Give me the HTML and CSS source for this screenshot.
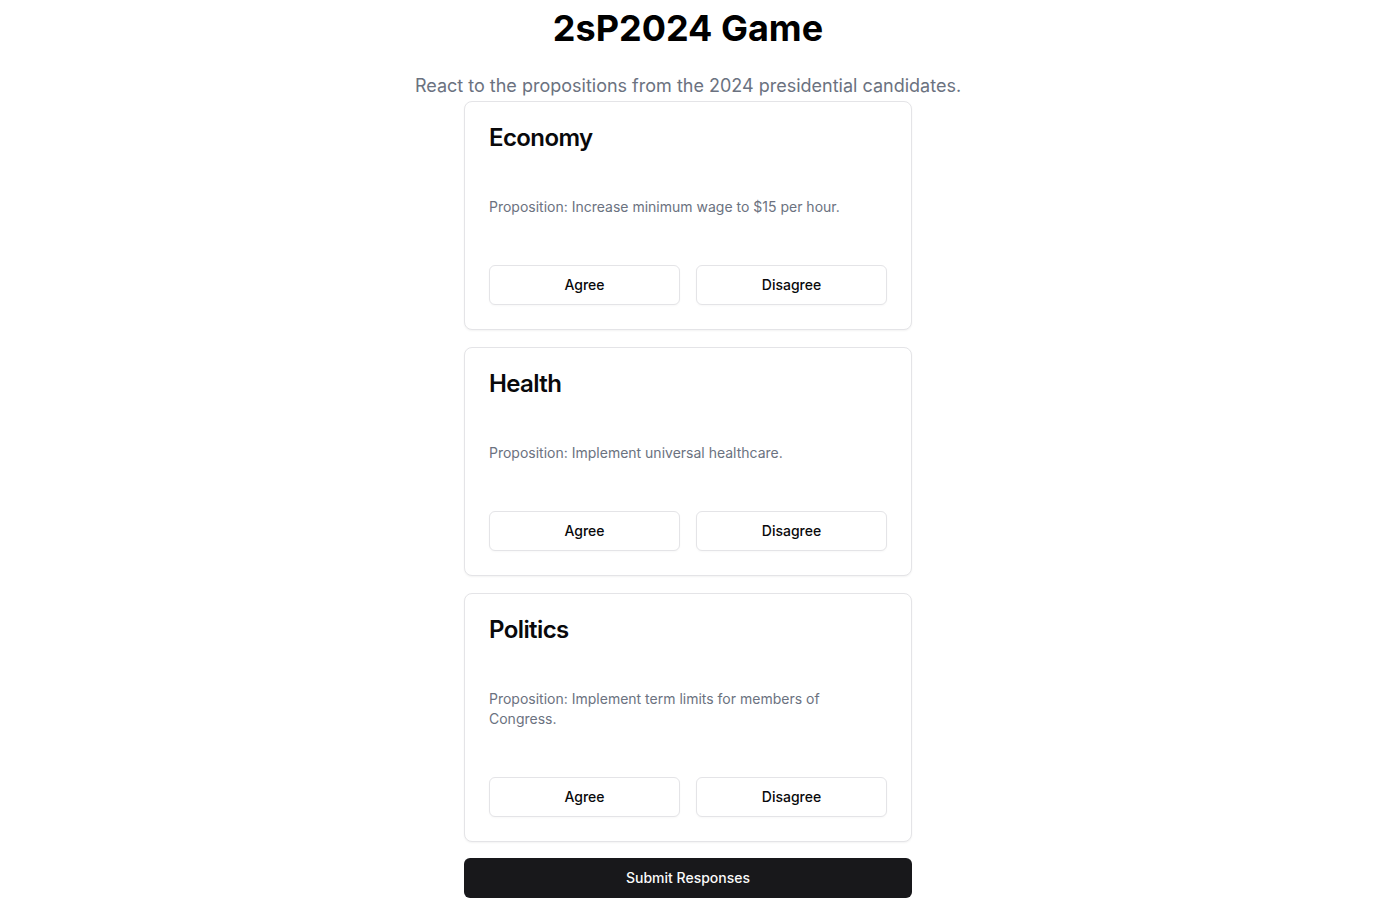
FILE: index.html
```html
<!DOCTYPE html>
<html lang="en">
<head>
<meta charset="utf-8">
<title>2sP2024 Game</title>
<link rel="stylesheet" href="styles.css">
</head>
<body>
<main class="page">
  <h1 class="title">2sP2024 Game</h1>
  <p class="subtitle">React to the propositions from the 2024 presidential candidates.</p>
  <div class="stack">
    <div class="cards">
      <section class="card">
        <h2 class="card-title">Economy</h2>
        <p class="prop">Proposition: Increase minimum wage to $15 per hour.</p>
        <div class="actions">
          <button class="btn">Agree</button>
          <button class="btn">Disagree</button>
        </div>
      </section>
      <section class="card">
        <h2 class="card-title">Health</h2>
        <p class="prop">Proposition: Implement universal healthcare.</p>
        <div class="actions">
          <button class="btn">Agree</button>
          <button class="btn">Disagree</button>
        </div>
      </section>
      <section class="card">
        <h2 class="card-title">Politics</h2>
        <p class="prop">Proposition: Implement term limits for members of Congress.</p>
        <div class="actions">
          <button class="btn">Agree</button>
          <button class="btn">Disagree</button>
        </div>
      </section>
    </div>
    <button class="submit">Submit Responses</button>
  </div>
</main>
</body>
</html>
```

FILE: styles.css
```css
* { box-sizing: border-box; }
html, body { background: #ffffff; }
body {
  margin: 8px;
  font-family: Inter, "Noto Sans", sans-serif;
  color: #09090b;
}
.page {
  display: flex;
  flex-direction: column;
  align-items: center;
}
.title {
  margin: 0 0 24px;
  font-size: 36px;
  line-height: 40px;
  font-weight: 700;
  color: #000000;
}
.subtitle {
  margin: 0 0 1px;
  font-size: 18px;
  line-height: 28px;
  color: #6b7280;
}
.stack {
  width: 448px;
  display: flex;
  flex-direction: column;
  gap: 16px;
}
.cards {
  display: flex;
  flex-direction: column;
  gap: 17px;
}
.card {
  border: 1px solid #e4e4e7;
  border-radius: 8px;
  background: #ffffff;
  box-shadow: 0 1px 2px rgba(0, 0, 0, 0.05);
  padding: 24px;
  display: flex;
  flex-direction: column;
}
.card-title {
  margin: 0;
  font-size: 24px;
  line-height: 24px;
  font-weight: 600;
  letter-spacing: -0.6px;
  color: #09090b;
}
.prop {
  margin: 47px 0 48px;
  font-size: 14px;
  line-height: 20px;
  color: #6b7280;
}
.actions {
  display: grid;
  grid-template-columns: 1fr 1fr;
  gap: 16px;
}
.btn {
  height: 40px;
  padding: 0 0 2px;
  border: 1px solid #e4e4e7;
  border-radius: 6px;
  background: #ffffff;
  font-family: Inter, "Noto Sans", sans-serif;
  font-size: 14px;
  font-weight: 500;
  color: #09090b;
  box-shadow: 0 1px 2px rgba(0, 0, 0, 0.03);
}
.submit {
  height: 40px;
  padding: 0 0 2px;
  border: none;
  border-radius: 6px;
  background: #18181b;
  color: #fafafa;
  font-family: Inter, "Noto Sans", sans-serif;
  font-size: 14px;
  font-weight: 500;
}
```
